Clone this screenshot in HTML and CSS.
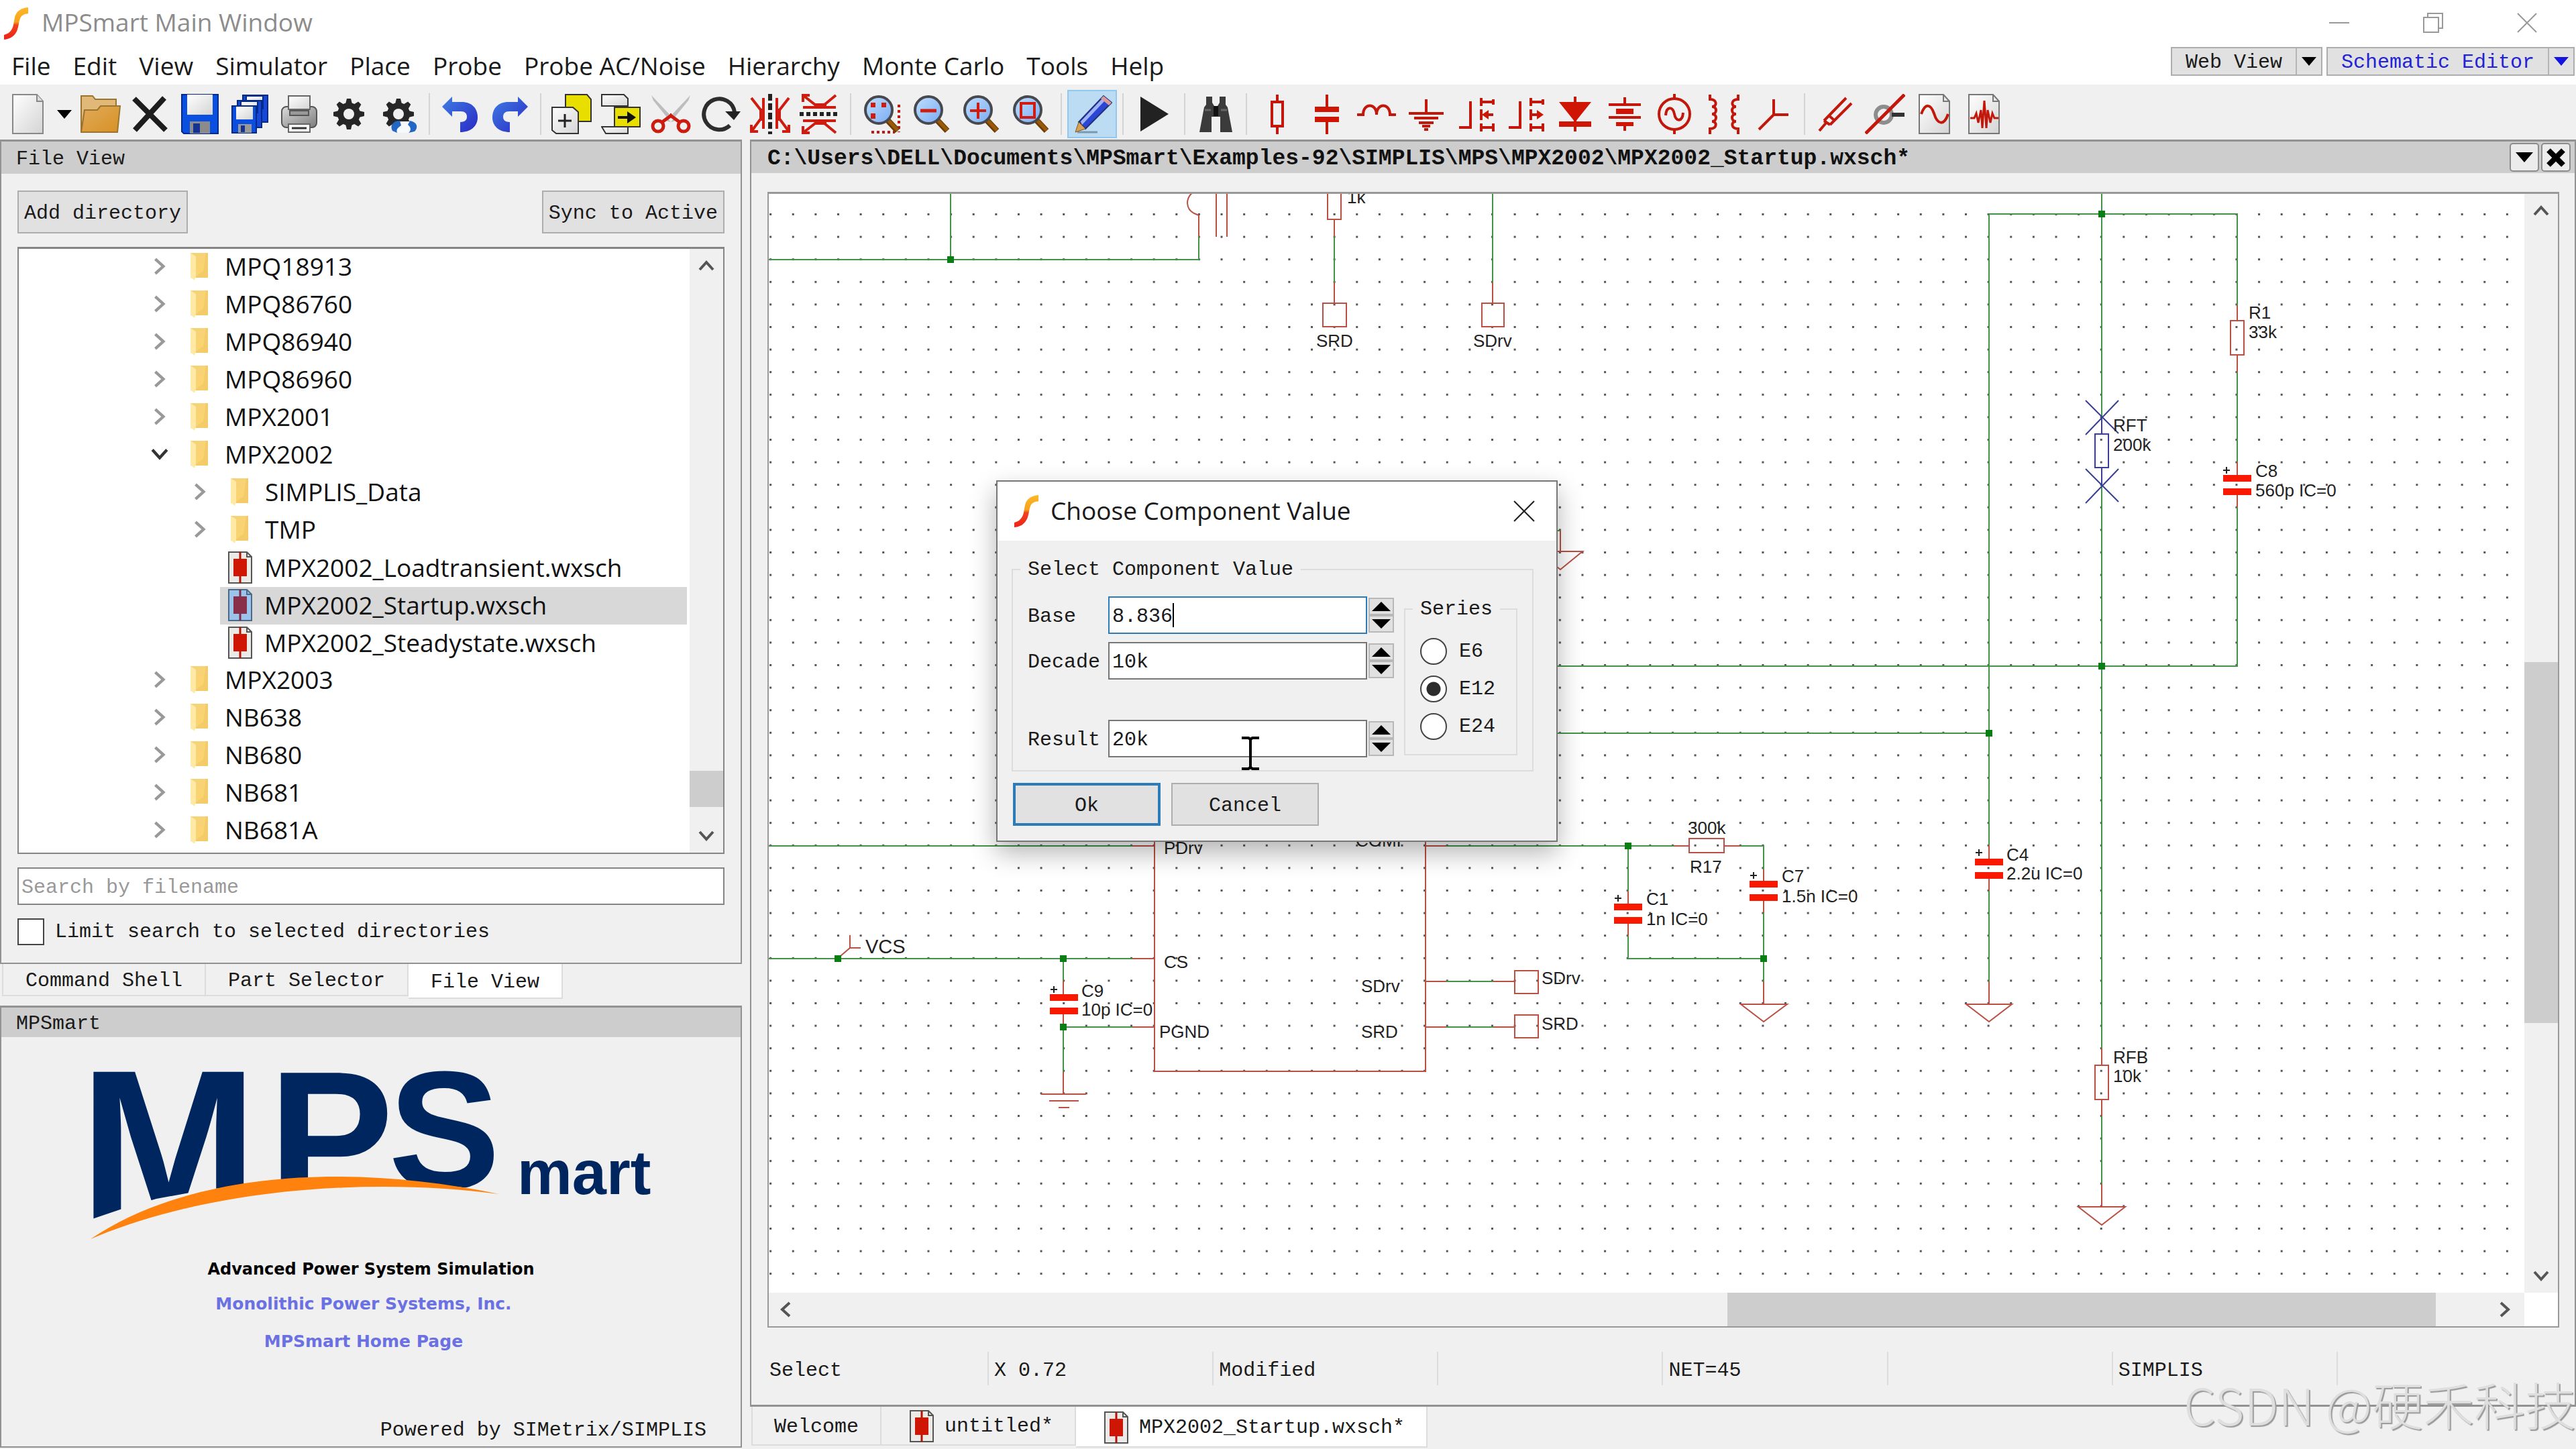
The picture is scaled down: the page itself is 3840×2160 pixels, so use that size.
FILE: index.html
```html
<!DOCTYPE html>
<html lang="en">
<head>
<meta charset="utf-8">
<title>MPSmart Main Window</title>
<link rel="stylesheet" href="styles.css">
</head>
<body>
<svg class="defs" width="0" height="0" aria-hidden="true">
  <defs>
    <linearGradient id="flame" x1="0" y1="0" x2="0" y2="1"><stop offset="0" stop-color="#fdb827"/><stop offset=".45" stop-color="#f9a21b"/><stop offset=".55" stop-color="#f0431d"/><stop offset="1" stop-color="#ee2218"/></linearGradient>
    <linearGradient id="paper" x1="0" y1="0" x2="1" y2="1"><stop offset="0" stop-color="#ffffff"/><stop offset="1" stop-color="#d4d4d4"/></linearGradient>
    <linearGradient id="wood" x1="0" y1="0" x2="1" y2="1"><stop offset="0" stop-color="#e0a95a"/><stop offset="1" stop-color="#d89224"/></linearGradient>
    <linearGradient id="blue" x1="0" y1="0" x2="1" y2="1"><stop offset="0" stop-color="#3f7fe4"/><stop offset="1" stop-color="#2a28c4"/></linearGradient>
    <linearGradient id="lens" x1="0" y1="0" x2="1" y2="1"><stop offset="0" stop-color="#bfe0ff"/><stop offset="1" stop-color="#7aaaf2"/></linearGradient>
    <linearGradient id="metal" x1="0" y1="0" x2="1" y2="1"><stop offset="0" stop-color="#dcdcdc"/><stop offset="1" stop-color="#7c7c7c"/></linearGradient>
    <linearGradient id="fold" x1="0" y1="0" x2="1" y2="1"><stop offset="0" stop-color="#f3d27c"/><stop offset="1" stop-color="#ffd56b"/></linearGradient>
    <symbol id="i-flame" viewBox="0 0 38 48"><path d="M37 0C26 1 19 6 17 15C15 25 15 32 9 37C6 40 3 40 1 41V48C11 47 18 42 21 33C24 24 23 14 30 11C33 9 36 10 37 9Z" fill="url(#flame)"/></symbol>
    <symbol id="i-folder" viewBox="0 0 28 42"><path d="M1 1H27V38H1Z" fill="url(#fold)"/><path d="M1 1L9 6V36L7 42L1 37Z" fill="#ffe9a4"/><path d="M9 36L20 28L24 1H27V38H9Z" fill="#eec565" opacity=".6"/></symbol>
    <symbol id="i-sch" viewBox="0 0 36 48"><path d="M1 1H28L35 8V47H1Z" fill="#eceae6" stroke="#555" stroke-width="2"/><path d="M28 1V8H35" fill="none" stroke="#555" stroke-width="2"/><path d="M18 1V47" stroke="#b41408" stroke-width="3"/><path d="M8 11H28V37H8Z" fill="#cf1503"/></symbol>
    <symbol id="i-sch-on" viewBox="0 0 36 48"><path d="M1 1H28L35 8V47H1Z" fill="#9cc4ea" stroke="#4b6a8a" stroke-width="2"/><path d="M28 1V8H35" fill="none" stroke="#4b6a8a" stroke-width="2"/><path d="M18 1V47" stroke="#7a2c4c" stroke-width="3"/><path d="M8 11H28V37H8Z" fill="#8a2f4a"/></symbol>
    <symbol id="i-gear" viewBox="0 0 60 60"><g transform="translate(30 30)" fill="#262626"><circle r="17"/><path id="tooth" d="M-5-15L-3-23H3L5-15V15L3 23H-3L-5 15Z"/><use href="#tooth" transform="rotate(45)"/><use href="#tooth" transform="rotate(90)"/><use href="#tooth" transform="rotate(135)"/><circle r="8" fill="#f0f0f0"/></g></symbol>
    <symbol id="i-lens" viewBox="0 0 60 60"><path d="M38 38L54 55" stroke="#6d3d05" stroke-width="9"/><path d="M38 37L54 54" stroke="#9a5a0c" stroke-width="5"/><circle cx="26" cy="24" r="20" fill="url(#lens)" stroke="#47494e" stroke-width="4"/></symbol>
    <symbol id="i-up" viewBox="0 0 24 20"><path d="M2 16L12 5L22 16" fill="none" stroke="currentColor" stroke-width="4"/></symbol>
    <symbol id="i-cap" viewBox="0 0 42 30"><path d="M0 0H42V10H0ZM0 20H42V30H0Z" fill="#f91800"/></symbol>
  </defs>
</svg>

<div class="app">
  <header class="titlebar">
    <svg class="flame"><use href="#i-flame"/></svg>
    <h1>MPSmart Main Window</h1>
    <div class="wincontrols">
      <button aria-label="Minimize"><svg viewBox="0 0 30 30"><path d="M0 15H30" class="thin"/></svg></button>
      <button aria-label="Restore"><svg viewBox="0 0 30 30"><path d="M1 7H23V29H1ZM7 7V1H29V23H23" class="thin"/></svg></button>
      <button aria-label="Close"><svg viewBox="0 0 30 30"><path d="M1 1L29 29M29 1L1 29" class="thin"/></svg></button>
    </div>
  </header>

  <nav class="menubar">
    <button>File</button><button>Edit</button><button>View</button><button>Simulator</button><button>Place</button><button>Probe</button><button>Probe AC/Noise</button><button>Hierarchy</button><button>Monte Carlo</button><button>Tools</button><button>Help</button>
    <div class="views">
      <button class="view"><span>Web View</span><i class="arrow"></i></button>
      <button class="view blue"><span>Schematic Editor</span><i class="arrow"></i></button>
    </div>
  </nav>

  <div class="toolbar">
    <button aria-label="New"><svg viewBox="0 0 60 60"><path d="M8 1H44L53 11V59H8Z" fill="url(#paper)" stroke="#888" stroke-width="2"/><path d="M44 1V11H53" fill="#ddd" stroke="#888" stroke-width="2"/></svg></button>
    <button class="drop" aria-label="New options"><i class="arrow"></i></button>
    <button aria-label="Open"><svg viewBox="0 0 60 60"><path d="M1 57V3H18L22 8H53V20" fill="#e2b878" stroke="#9b7430" stroke-width="2"/><path d="M1 57L6 24H25L30 18H59L55 57Z" fill="url(#wood)" stroke="#9b7430" stroke-width="2"/></svg></button>
    <button aria-label="Close file"><svg viewBox="0 0 60 60"><path d="M6 7L53 54M51 6L7 54" stroke="#1d1d1d" stroke-width="8"/></svg></button>
    <button aria-label="Save"><svg viewBox="0 0 60 60"><path d="M3 1H57V59H6L3 56Z" fill="#0a4fe0" stroke="#032a86" stroke-width="2"/><path d="M11 1H49V31H11Z" fill="url(#paper)"/><path d="M15 41H45V59H15Z" fill="#8b8b8b"/><path d="M20 44H30V58H20Z" fill="#14328f"/></svg></button>
    <button aria-label="Save all"><svg viewBox="0 0 60 60"><g stroke="#032a86" stroke-width="2"><path d="M20 2H57V42H20Z" fill="#1648d8"/><path d="M25 3H50V22H25Z" fill="url(#paper)"/><path d="M12 10H48V50H12Z" fill="#1648d8"/><path d="M17 11H42V28H17Z" fill="url(#paper)"/><path d="M4 18H40V58H4Z" fill="#0a4fe0"/></g><path d="M10 19H35V38H10Z" fill="url(#paper)"/><path d="M13 45H33V58H13Z" fill="#999"/><path d="M17 47H23V57H17Z" fill="#14328f"/></svg></button>
    <button aria-label="Print"><svg viewBox="0 0 60 60"><rect x="4" y="19" width="52" height="31" rx="7" fill="url(#metal)" stroke="#555" stroke-width="2"/><path d="M14 3H46V23H14Z" fill="url(#paper)" stroke="#666" stroke-width="2"/><path d="M16 25H44V32H16Z" fill="#999" stroke="#555" stroke-width="2"/><path d="M14 45H46V57H14Z" fill="#fff" stroke="#666" stroke-width="2"/><path d="M19 51H41" stroke="#333" stroke-width="3"/></svg></button>
    <button aria-label="Options"><svg><use href="#i-gear"/></svg></button>
    <button aria-label="Configure"><svg viewBox="0 0 60 60"><use href="#i-gear" width="60" height="60"/><path d="M27 41H48L54 58H30L22 48Z" fill="#f6f8fc"/><path d="M32 40C21 40 17 48 21 55L28 58C26 52 30 50 34 47ZM47 40C58 42 60 50 54 56L45 58C50 54 48 49 44 46Z" fill="#2466c4"/></svg></button>
    <span class="sep"></span>
    <button aria-label="Undo"><svg viewBox="0 0 60 60"><path d="M3 19L18 4V12H32C48 12 56 22 56 35C56 48 46 57 30 57V42C38 42 40 38 40 34C40 29 37 26 31 26H18V34Z" fill="url(#blue)"/></svg></button>
    <button aria-label="Redo"><svg viewBox="0 0 60 60"><path d="M57 19L42 4V12H28C12 12 4 22 4 35C4 48 14 57 30 57V42C22 42 20 38 20 34C20 29 23 26 29 26H42V34Z" fill="url(#blue)"/></svg></button>
    <span class="sep"></span>
    <button aria-label="Duplicate"><svg viewBox="0 0 60 60"><path d="M21 1H53L59 8V41H21Z" fill="#e8de00" stroke="#333" stroke-width="2"/><path d="M1 20H32L40 27V59H7L1 54Z" fill="url(#paper)" stroke="#333" stroke-width="2"/><path d="M20 30V50M10 40H30" stroke="#222" stroke-width="3"/></svg></button>
    <button aria-label="Paste"><svg viewBox="0 0 60 60"><path d="M1 1H34L40 7V18H1Z" fill="url(#paper)" stroke="#333" stroke-width="2"/><path d="M1 49H40V59H7Z" fill="url(#paper)" stroke="#333" stroke-width="2"/><path d="M20 20H58V49H20Z" fill="#e8de00" stroke="#333" stroke-width="2"/><path d="M25 35H42" stroke="#111" stroke-width="4"/><path d="M39 26L52 35L39 44Z" fill="#111"/></svg></button>
    <button aria-label="Cut"><svg viewBox="0 0 60 60"><path d="M1 2L37 40L30 42L4 10ZM59 2L23 40L30 42L56 10Z" fill="#bdbdbd"/><g fill="none" stroke="#cc1c10" stroke-width="5"><circle cx="11" cy="48" r="8"/><circle cx="49" cy="48" r="8"/><path d="M17 42L32 31M43 42L28 31"/></g></svg></button>
    <button aria-label="Rotate"><svg viewBox="0 0 60 60"><path d="M44 47A23 23 0 1 1 51 27" fill="none" stroke="#2d2d2d" stroke-width="6"/><path d="M37 26H60L50 39Z" fill="#222"/></svg></button>
    <button aria-label="Mirror"><svg viewBox="0 0 60 60"><g stroke="#cf1c10" stroke-width="4" fill="none"><path d="M2 6L16 24V37L2 56M20 6V52M58 6L44 24V37L58 56M40 6V52"/><path d="M2 46V56H12M58 46V56H48"/></g><path d="M14 22H22V40H14ZM38 22H46V40H38Z" fill="#cf1c10"/><path d="M30 0V60" stroke="#222" stroke-width="6" stroke-dasharray="10 4"/></svg></button>
    <button aria-label="Flip"><svg viewBox="0 0 60 60"><g stroke="#cf1c10" stroke-width="4" fill="none"><path d="M5 2L23 16H37L54 2M5 20H54M5 58L23 44H37L54 58M5 40H54"/><path d="M5 12V2H15M5 48V58H15"/></g><path d="M22 14H40V22H22ZM22 38H40V46H22Z" fill="#cf1c10"/><path d="M0 30H60" stroke="#222" stroke-width="6" stroke-dasharray="6 4"/></svg></button>
    <span class="sep"></span>
    <button aria-label="Zoom box"><svg viewBox="0 0 60 60"><path d="M15 57H50M56 16V57" stroke="#c01810" stroke-width="4" stroke-dasharray="4 4"/><use href="#i-lens" width="60" height="60"/><path d="M14 13H21V20H14ZM30 13H37V20H30ZM14 29H21V37H14Z" fill="#cf1c10"/></svg></button>
    <button aria-label="Zoom out"><svg viewBox="0 0 60 60"><use href="#i-lens" width="60" height="60"/><path d="M14 25H38" stroke="#cf1c10" stroke-width="5"/></svg></button>
    <button aria-label="Zoom in"><svg viewBox="0 0 60 60"><use href="#i-lens" width="60" height="60"/><path d="M14 25H38M26 13V37" stroke="#cf1c10" stroke-width="4"/></svg></button>
    <button aria-label="Zoom fit"><svg viewBox="0 0 60 60"><use href="#i-lens" width="60" height="60"/><path d="M16 14H36V35H16Z" fill="none" stroke="#cf1c10" stroke-width="4"/></svg></button>
    <span class="sep"></span>
    <button class="on" aria-label="Wire pencil"><svg viewBox="0 0 60 60"><path d="M8 57H38" stroke="#7b98ad" stroke-width="3"/><path d="M10 42L47 3L59 13L20 52Z" fill="#2a46d4" stroke="#23307a" stroke-width="2"/><path d="M13 41L47 5L51 8L15 46Z" fill="#9fb2f4"/><path d="M43 7L47 3L59 13L55 17Z" fill="#d99a9a"/><path d="M10 42L20 52L5 57Z" fill="#d9a154" stroke="#7d5a22"/></svg></button>
    <span class="sep"></span>
    <button aria-label="Run"><svg viewBox="0 0 60 60"><path d="M10 4L52 30L10 56Z" fill="#222"/></svg></button>
    <span class="sep"></span>
    <button aria-label="Find"><svg viewBox="0 0 60 60"><path d="M16 4H25V13L28 18H33L36 13V4H45V16L48 20L55 57H37V34H24V57H6L13 20L16 16Z" fill="#3b3b3b"/><path d="M27 18H34V33H27Z" fill="#111"/><path d="M14 24H23M38 24H47" stroke="#666" stroke-width="3"/></svg></button>
    <span class="sep"></span>
    <button class="red" aria-label="Resistor"><svg viewBox="0 0 60 60"><path d="M30 1V12M30 48V60M22 12H38V48H22Z"/></svg></button>
    <button class="red" aria-label="Capacitor"><svg viewBox="0 0 60 60"><path d="M30 1V20M30 40V60"/><path d="M12 19H48V27H12ZM12 34H48V42H12Z" class="fill"/></svg></button>
    <button class="red" aria-label="Inductor"><svg viewBox="0 0 60 60"><path d="M1 31H10C10 13 30 13 30 31C30 13 50 13 50 31H59"/></svg></button>
    <button class="red" aria-label="Ground"><svg viewBox="0 0 60 60"><path d="M30 8V29M4 29H56M12 36H48M19 43H41M24 48H36M27 53H33"/></svg></button>
    <button class="red" aria-label="NMOS"><svg viewBox="0 0 60 60"><path d="M5 50H22V11M38 6V18M38 23V39M38 44V56M38 12H56M38 50H56M56 8V16M56 44V56M42 31H56"/><path d="M39 31L49 24V38Z" class="fill"/></svg></button>
    <button class="red" aria-label="PMOS"><svg viewBox="0 0 60 60"><path d="M5 50H22V11M38 6V18M38 23V39M38 44V56M38 12H56M38 50H56M56 8V16M56 44V56M38 31H48"/><path d="M57 31L47 24V38Z" class="fill"/></svg></button>
    <button class="red" aria-label="Diode"><svg viewBox="0 0 60 60"><path d="M30 4V56"/><path d="M6 12H54L30 42ZM6 41H54V49H6Z" class="fill"/></svg></button>
    <button class="red" aria-label="Battery"><svg viewBox="0 0 60 60"><path d="M30 5V16M30 46V55M6 16H54M6 35H54"/><path d="M17 22H43V30H17ZM17 42H43V48H17Z" class="fill"/></svg></button>
    <button class="red" aria-label="AC source"><svg viewBox="0 0 60 60"><circle cx="30" cy="30" r="23"/><path d="M30 0V7M30 53V60M17 32C18 18 28 18 30 30C32 42 42 42 43 28"/></svg></button>
    <button class="red" aria-label="Transformer"><svg viewBox="0 0 60 60"><path d="M9 1V8C20 8 20 19 12 19C20 19 20 30 12 30C20 30 20 41 12 41C20 41 20 52 9 52V60M51 1V8C40 8 40 19 48 19C40 19 40 30 48 30C40 30 40 41 48 41C40 41 40 52 51 52V60"/></svg></button>
    <button class="red" aria-label="Probe"><svg viewBox="0 0 60 60"><path d="M30 8V31H52M30 31L8 53"/></svg></button>
    <span class="sep"></span>
    <button class="red" aria-label="Voltage probe"><svg viewBox="0 0 60 60"><path d="M6 55L18 41M13 40L46 6M22 46L54 14M13 40L22 46M20 32L28 39"/></svg></button>
    <button aria-label="Current probe"><svg viewBox="0 0 60 60"><circle cx="28" cy="31" r="12" fill="none" stroke="#8d8d8d" stroke-width="6"/><path d="M40 31H59" stroke="#333" stroke-width="6"/><path d="M1 59L59 1" stroke="#c2180c" stroke-width="5"/></svg></button>
    <button aria-label="Waveform"><svg viewBox="0 0 60 60"><path d="M7 1H43L52 11V59H7Z" fill="url(#paper)" stroke="#777" stroke-width="2"/><path d="M43 1V11H52" fill="none" stroke="#777" stroke-width="2"/><path d="M10 30C16 13 24 15 29 29C34 46 44 48 50 30" fill="none" stroke="#c2180c" stroke-width="4"/></svg></button>
    <button aria-label="Fourier"><svg viewBox="0 0 60 60"><path d="M7 1H43L52 11V59H7Z" fill="url(#paper)" stroke="#777" stroke-width="2"/><path d="M43 1V11H52" fill="none" stroke="#777" stroke-width="2"/><path d="M9 36H15L18 29L21 43L25 24L27 51L30 10L33 51L35 24L39 43L42 29L45 36H51" fill="none" stroke="#c2180c" stroke-width="3"/></svg></button>
  </div>

  <main class="workspace">
    <aside class="sidebar">
      <section class="dock files">
        <h2>File View</h2>
        <div class="dockbody">
          <div class="actions"><button class="btn">Add directory</button><button class="btn">Sync to Active</button></div>
          <div class="treebox">
            <ul class="tree">
              <li><svg class="chev"><use href="#i-up"/></svg><svg class="folder"><use href="#i-folder"/></svg>MPQ18913</li>
              <li><svg class="chev"><use href="#i-up"/></svg><svg class="folder"><use href="#i-folder"/></svg>MPQ86760</li>
              <li><svg class="chev"><use href="#i-up"/></svg><svg class="folder"><use href="#i-folder"/></svg>MPQ86940</li>
              <li><svg class="chev"><use href="#i-up"/></svg><svg class="folder"><use href="#i-folder"/></svg>MPQ86960</li>
              <li><svg class="chev"><use href="#i-up"/></svg><svg class="folder"><use href="#i-folder"/></svg>MPX2001</li>
              <li><svg class="chev open"><use href="#i-up"/></svg><svg class="folder"><use href="#i-folder"/></svg>MPX2002</li>
              <li class="child"><svg class="chev"><use href="#i-up"/></svg><svg class="folder"><use href="#i-folder"/></svg>SIMPLIS_Data</li>
              <li class="child"><svg class="chev"><use href="#i-up"/></svg><svg class="folder"><use href="#i-folder"/></svg>TMP</li>
              <li class="leaf"><span><svg class="sch"><use href="#i-sch"/></svg>MPX2002_Loadtransient.wxsch</span></li>
              <li class="leaf selected"><span><svg class="sch"><use href="#i-sch-on"/></svg>MPX2002_Startup.wxsch</span></li>
              <li class="leaf"><span><svg class="sch"><use href="#i-sch"/></svg>MPX2002_Steadystate.wxsch</span></li>
              <li><svg class="chev"><use href="#i-up"/></svg><svg class="folder"><use href="#i-folder"/></svg>MPX2003</li>
              <li><svg class="chev"><use href="#i-up"/></svg><svg class="folder"><use href="#i-folder"/></svg>NB638</li>
              <li><svg class="chev"><use href="#i-up"/></svg><svg class="folder"><use href="#i-folder"/></svg>NB680</li>
              <li><svg class="chev"><use href="#i-up"/></svg><svg class="folder"><use href="#i-folder"/></svg>NB681</li>
              <li><svg class="chev"><use href="#i-up"/></svg><svg class="folder"><use href="#i-folder"/></svg>NB681A</li>
            </ul>
            <div class="scroll vert tree-scroll"><svg class="tip"><use href="#i-up"/></svg><i class="before"></i><i class="thumb"></i><i class="after"></i><svg class="tip down"><use href="#i-up"/></svg></div>
          </div>
          <input class="search" type="text" placeholder="Search by filename" aria-label="Search by filename">
          <label class="limit"><input type="checkbox">Limit search to selected directories</label>
        </div>
      </section>
      <div class="tabs side-tabs"><button>Command Shell</button><button>Part Selector</button><button class="active">File View</button></div>
      <section class="dock about">
        <h2>MPSmart</h2>
        <svg class="logo" viewBox="104 1560 900 300" role="img" aria-label="MPS mart">
          <g class="mps"><text class="big" x="119" y="1820">M</text><text class="mid" x="401" y="1794">P</text><text class="low" x="580" y="1774">S</text></g>
          <path d="M130 1822L183 1804L234 1789L300 1777L410 1762H600L745 1778V1845H130Z" fill="#f0f0f0"/>
          <path d="M136 1849C280 1752 510 1733 745 1782C540 1755 300 1778 136 1849Z" fill="#fe820d"/>
          <text class="mart" x="772" y="1782">mart</text>
        </svg>
        <p class="tagline">Advanced Power System Simulation</p>
        <a href="#mps">Monolithic Power Systems, Inc.</a>
        <a href="#home">MPSmart Home Page</a>
        <p class="powered">Powered by SIMetrix/SIMPLIS</p>
      </section>
    </aside>

    <section class="editor">
      <div class="sheet">
        <header class="path"><h2>C:\Users\DELL\Documents\MPSmart\Examples-92\SIMPLIS\MPS\MPX2002\MPX2002_Startup.wxsch*</h2>
          <button aria-label="List"><i class="arrow"></i></button><button aria-label="Close sheet"><svg viewBox="0 0 28 28"><path d="M3 3L25 25M25 3L3 25" stroke="#000" stroke-width="8"/></svg></button>
        </header>
        <div class="canvas">
          <div class="view-area">
          <svg class="schematic">
            <defs><pattern id="grid" x="1249" y="319" width="33.62" height="33.6" patternUnits="userSpaceOnUse"><rect width="3" height="3" fill="#555"/></pattern></defs>
            <g transform="translate(-1146 -289)">
              <rect x="1146" y="280" width="2700" height="1640" fill="url(#grid)" transform="translate(-1 -1)"/>
              <g class="wire">
                <path d="M1417 280V387M1146 387H1787V353M1989 353V421M2225 280V421"/>
                <path d="M3133 280V622M2965 1260V319H3335V455M3335 555V689M3335 756V993H2300M2300 1093H2965M3133 724V1563M3133 1664V1765"/>
                <path d="M1146 1261H1688M1146 1429H1688M1585 1429V1462M1585 1531V1598M1585 1531H1688"/>
                <path d="M2156 1463H2226M2156 1531H2226M2156 1261H2495M2427 1261V1329M2427 1395V1429H2629M2594 1261H2629V1296M2629 1361V1463M2965 1328V1463"/>
                <path d="M2300 791H2326"/>
              </g>
              <g class="part">
                <path d="M1779 286C1766 296 1768 312 1780 318L1787 321V353M1813 286V353M1829 286V353"/>
                <path d="M1979 280V327H1999V280M1989 327V353M1989 421V452M1972 452H2007V487H1972ZM2225 421V452M2209 452H2242V487H2209Z"/>
                <path d="M3335 455V478M3325 478H3345V529H3325ZM3335 529V555M3335 689V708M3335 738V756"/>
                <path d="M2326 791V822M2292 822H2359L2326 849Z"/>
                <path d="M1688 1261H1721M1688 1429H1721M1688 1531H1721M1721 1200V1597H2125V1200M2125 1261H2156M2125 1463H2156M2125 1531H2156"/>
                <path d="M2226 1463H2258V1447H2293V1481H2258V1463M2226 1531H2258V1513H2293V1547H2258V1531"/>
                <path d="M1253 1425L1267 1413V1394M1267 1413H1283"/>
                <path d="M1585 1462V1482M1585 1512V1531M1585 1598V1631M1552 1631H1619M1564 1641H1608M1578 1651H1594"/>
                <path d="M2495 1261H2518M2518 1250H2570V1271H2518ZM2570 1261H2594"/>
                <path d="M2427 1329V1348M2427 1376V1395M2629 1296V1313M2629 1343V1361M2629 1463V1497M2595 1497H2664L2629 1523Z"/>
                <path d="M2965 1260V1280M2965 1310V1328M2965 1463V1497M2931 1497H2999L2965 1523Z"/>
                <path d="M3133 1563V1588M3123 1588H3143V1639H3123ZM3133 1639V1664M3133 1765V1799M3098 1799H3168L3133 1826Z"/>
              </g>
              <g class="picked"><path d="M3109 597L3158 646M3158 597L3109 648M3109 699L3158 748M3158 699L3109 750M3133 622V647M3123 647H3143V697H3123ZM3133 697V724"/></g>
              <use href="#i-cap" x="3314" y="708" width="42" height="30"/>
              <use href="#i-cap" x="1565" y="1482" width="42" height="30"/>
              <use href="#i-cap" x="2406" y="1347" width="42" height="30"/>
              <use href="#i-cap" x="2608" y="1313" width="42" height="30"/>
              <use href="#i-cap" x="2944" y="1280" width="42" height="30"/>
              <path class="plus" d="M3314 701H3324M3319 696V706M1566 1475H1576M1571 1470V1480M2407 1339H2417M2412 1334V1344M2609 1305H2619M2614 1300V1310M2945 1271H2955M2950 1266V1276"/>
              <path class="node" d="M1412 382h10v10h-10zM3128 314h10v10h-10zM3128 988h10v10h-10zM2960 1088h10v10h-10zM1244 1424h10v10h-10zM1580 1424h10v10h-10zM1580 1526h10v10h-10zM2422 1256h10v10h-10zM2624 1424h10v10h-10z"/>
              <g class="names">
                <text x="2008" y="303">1k</text><text x="1962" y="517">SRD</text><text x="2196" y="517">SDrv</text>
                <text x="3352" y="475">R1</text><text x="3352" y="504">33k</text>
                <text x="3150" y="643">RFT</text><text x="3150" y="672">200k</text>
                <text x="3362" y="711">C8</text><text x="3362" y="740">560p IC=0</text>
                <text x="1735" y="1273">PDrv</text><text x="2021" y="1262">COMP</text><text x="1735" y="1443">CS</text><text x="1728" y="1547">PGND</text>
                <text x="2029" y="1479">SDrv</text><text x="2029" y="1547">SRD</text><text x="2298" y="1467">SDrv</text><text x="2298" y="1535">SRD</text>
                <text x="1290" y="1421" class="wide">VCS</text><text x="1612" y="1486">C9</text><text x="1612" y="1514">10p IC=0</text>
                <text x="2516" y="1243">300k</text><text x="2519" y="1301">R17</text>
                <text x="2454" y="1349">C1</text><text x="2454" y="1379">1n IC=0</text>
                <text x="2656" y="1315">C7</text><text x="2656" y="1345">1.5n IC=0</text>
                <text x="2991" y="1283">C4</text><text x="2991" y="1311">2.2u IC=0</text>
                <text x="3150" y="1585">RFB</text><text x="3150" y="1613">10k</text>
              </g>
            </g>
          </svg>
          </div>
          <div class="scroll vert sheet-v"><svg class="tip"><use href="#i-up"/></svg><i class="before"></i><i class="thumb"></i><i class="after"></i><svg class="tip down"><use href="#i-up"/></svg></div>
          <div class="scroll horiz sheet-h"><svg class="tip left"><use href="#i-up"/></svg><i class="before"></i><i class="thumb"></i><i class="after"></i><svg class="tip right"><use href="#i-up"/></svg></div>
        </div>
        <footer class="status"><span>Select</span><span>X 0.72</span><span>Modified</span><span></span><span>NET=45</span><span></span><span>SIMPLIS</span><span></span></footer>
      </div>
      <div class="tabs sheet-tabs"><button>Welcome</button><button><svg class="sch"><use href="#i-sch"/></svg>untitled*</button><button class="active"><svg class="sch"><use href="#i-sch"/></svg>MPX2002_Startup.wxsch*</button></div>
    </section>
  </main>

  <div class="dialog" role="dialog" aria-labelledby="dlg">
    <header><svg class="flame"><use href="#i-flame"/></svg><h2 id="dlg">Choose Component Value</h2><button aria-label="Close dialog"><svg viewBox="0 0 30 30"><path d="M1 1L29 29M29 1L1 29" stroke="#222" stroke-width="2"/></svg></button></header>
    <form>
      <fieldset class="group">
        <legend>Select Component Value</legend>
        <div class="fields">
          <label for="base">Base</label><div class="field"><input id="base" class="focus" value="8.836"><i class="caret"></i></div><div class="spin"><button type="button" aria-label="Base up"><i class="tri up"></i></button><button type="button" aria-label="Base down"><i class="tri"></i></button></div>
          <label for="decade">Decade</label><div class="field"><input id="decade" value="10k"></div><div class="spin"><button type="button" aria-label="Decade up"><i class="tri up"></i></button><button type="button" aria-label="Decade down"><i class="tri"></i></button></div>
          <label for="result" class="last">Result</label><div class="field last"><input id="result" value="20k"></div><div class="spin last"><button type="button" aria-label="Result up"><i class="tri up"></i></button><button type="button" aria-label="Result down"><i class="tri"></i></button></div>
        </div>
        <fieldset class="series">
          <legend>Series</legend>
          <label><input type="radio" name="series">E6</label>
          <label><input type="radio" name="series" checked>E12</label>
          <label><input type="radio" name="series">E24</label>
        </fieldset>
      </fieldset>
      <div class="buttons"><button type="button" class="btn default">Ok</button><button type="button" class="btn">Cancel</button></div>
    </form>
    <svg class="ibeam" viewBox="0 0 28 50"><path d="M1 2H11L14 4L17 2H27M1 48H11L14 46L17 48H27M14 4V46" fill="none" stroke="#000" stroke-width="4"/></svg>
  </div>

  <div class="watermark">CSDN @硬禾科技</div>
</div>
</body>
</html>
```
FILE: styles.css
```css
* { box-sizing: border-box; }
body { margin: 0; background: #f0f0f0; color: #1a1a1a; font: 30px/36px "Liberation Mono", "Noto Sans CJK SC", monospace; }
button, input { font: inherit; color: inherit; }
button { border: 0; background: none; padding: 0; margin: 0; }
h1, h2, p, ul { margin: 0; padding: 0; font-weight: normal; font-size: inherit; }
.defs { position: absolute; }
.app { position: relative; display: flex; flex-direction: column; min-height: 100vh; overflow: hidden; }

.titlebar, .menubar, .tree, .dialog header { font-family: "Open Sans", "Noto Sans", sans-serif; font-size: 37px; line-height: 56px; }
.titlebar { display: flex; align-items: center; height: 70px; background: #fff; padding-left: 5px; }
.titlebar h1 { color: #8c8c8c; flex: 1; margin-left: 19px; padding-bottom: 4px; }
.flame { width: 38px; height: 48px; }
.wincontrols { display: flex; gap: 110px; padding: 0 58px 2px 0; }
.wincontrols svg { display: block; width: 30px; height: 30px; }
.thin { fill: none; stroke: #999; stroke-width: 2; }

.menubar { display: flex; align-items: flex-start; gap: 33px; height: 56px; background: #fff; padding: 0 2px 0 17px; }
.views { display: flex; gap: 6px; margin-left: auto; font: 30px/43px "Liberation Mono", monospace; }
.view { display: flex; height: 43px; border: 2px solid #adadad; background: #e1e1e1; }
.view span { height: 39px; padding: 0 20px; border-right: 2px solid #b5b5b5; }
.view .arrow { align-self: center; margin: 0 7px; }
.blue { color: #2222d8; }
.arrow { display: block; width: 0; height: 0; border: 11px solid transparent; border-top: 13px solid #000; border-bottom: 0; }
.blue .arrow { border-top-color: #1414e0; }

.toolbar { display: flex; align-items: center; height: 82px; padding: 6px 0 0 4px; background: #f0f0f0; }
.toolbar button { width: 74px; height: 72px; display: grid; place-items: center; }
.toolbar svg { width: 60px; height: 60px; }
.toolbar .drop { width: 35px; }
.toolbar .on { background: #bcdcf4; border: 2px solid #90c8f0; }
.sep { width: 2px; height: 62px; margin: 0 8px; background: #d4d4d4; }
.red svg { fill: none; stroke: #c2180c; stroke-width: 4; }
.red .fill { fill: #cf1503; stroke: none; }

.workspace { flex: 1; display: flex; gap: 12px; }
.sidebar { flex: 0 0 28.8%; display: flex; flex-direction: column; }
.dock { border: 2px solid #929292; border-top-width: 3px; }
.dock h2 { background: #cdcdcd; padding: 8px 22px 4px; }
.dockbody { padding: 25px 24px 26px; }
.actions { display: flex; justify-content: space-between; margin-bottom: 20px; }
.btn { height: 64px; border: 2px solid #adadad; background: #e1e1e1; padding-top: 4px; }
.actions .btn { padding: 4px 8px 0; }
.treebox { display: flex; border: 2px solid #858585; border-top-width: 3px; background: #fff; height: 905px; }
.tree { flex: 1; list-style: none; line-height: 52px; }
.tree li { display: flex; align-items: center; height: 56px; padding: 0 0 4px 197px; color: #111; }
.tree .child { padding-left: 257px; }
.tree .leaf { padding: 0 0 0 300px; }
.leaf span { display: flex; align-items: center; flex: 1; height: 56px; padding: 0 0 3px 12px; margin-right: 4px; }
.selected span { background: #d8d8d8; }
.chev { width: 26px; height: 26px; margin-right: 32px; color: #999; transform: rotate(90deg); }
.chev.open { color: #333; transform: rotate(180deg); }
.folder { width: 28px; height: 42px; margin-right: 24px; }
.sch { width: 36px; height: 48px; margin-right: 18px; }
.scroll { display: flex; background: #f0f0f0; color: #555; align-items: center; }
.vert { flex-direction: column; width: 50px; }
.horiz { height: 50px; }
.tip { flex: 0 0 24px; width: 24px; height: 24px; margin: 13px; }
.down { transform: rotate(180deg); }
.left { transform: rotate(-90deg); }
.right { transform: rotate(90deg); margin: 13px 17px 13px 9px; }
.thumb { background: #cdcdcd; align-self: stretch; }
.tree-scroll .before { flex: 727; } .tree-scroll .thumb { flex: 54; } .tree-scroll .after { flex: 18; }
.sheet-v .before { flex: 648; } .sheet-v .thumb { flex: 537; } .sheet-v .after { flex: 352; }
.sheet-h .before { flex: 1378; } .sheet-h .thumb { flex: 1055; } .sheet-h .after { flex: 82; }
.search { display: block; width: 100%; height: 56px; margin: 20px 0; border: 2px solid #858585; padding: 3px 4px 0; background: #fff; }
.search::placeholder { color: #999; opacity: 1; }
.limit { display: flex; align-items: center; height: 40px; gap: 16px; }
.limit input { appearance: none; width: 40px; height: 40px; margin: 0; border: 2px solid #444; background: #fff; }

.tabs { display: flex; align-items: flex-start; }
.tabs button { display: flex; align-items: center; justify-content: center; border: 2px solid #dcdcdc; border-top: 0; }
.tabs .active { background: #fff; }
.side-tabs { height: 62px; padding-left: 3px; }
.side-tabs button { height: 48px; padding: 4px 33px 0; }
.side-tabs button + button { border-left: 0; }
.side-tabs .active { height: 52px; }
.about { flex: 1; display: flex; flex-direction: column; align-items: center; margin-bottom: 2px; font-family: "DejaVu Sans", sans-serif; }
.about h2, .powered { font-family: "Liberation Mono", monospace; }
.about h2 { align-self: stretch; padding: 6px 22px 2px; }
.logo { width: 900px; height: 300px; margin-top: 12px; }
.mps, .mart { font: bold 92px "Liberation Sans", sans-serif; fill: #00265f; }
.big { font-size: 320px; }
.mid { font-size: 280px; }
.low { font-size: 250px; }
.tagline, .about a { font-size: 25px; font-weight: bold; line-height: 36px; }
.tagline { font-size: 24px; color: #000; margin: 16px 0; }
.about a { color: #6b70e2; text-decoration: none; margin: 0 22px 20px 0; }
.powered { margin-top: auto; align-self: flex-end; padding: 0 51px 6px; }

.editor { flex: 1; display: flex; flex-direction: column; min-width: 0; }
.sheet { flex: 1; display: flex; flex-direction: column; border: 2px solid #929292; border-top-width: 3px; border-bottom-width: 3px; }
.path { display: flex; align-items: center; height: 47px; background: #cdcdcd; gap: 3px; padding-right: 6px; }
.path h2 { flex: 1; padding: 4px 0 0 24px; font-weight: bold; font-size: 33px; color: #111; }
.path button { display: grid; place-items: center; width: 44px; height: 43px; border: 2px solid #8c8c8c; border-radius: 5px; background: #ececec; }
.path .arrow { border-width: 15px 13px 0; }
.path svg { width: 30px; height: 28px; }
.canvas { flex: 1; display: grid; grid-template: 1fr 50px / 1fr 50px; margin: 28px 23px 0 24px; border: 2px solid #999; border-top-width: 3px; background: #fff; }
.view-area { position: relative; overflow: hidden; }
.schematic { position: absolute; width: 100%; height: 100%; }
.wire { fill: none; stroke: #43934a; stroke-width: 2; }
.part { fill: none; stroke: #bb4f43; stroke-width: 2; }
.picked { fill: none; stroke: #3b3f94; stroke-width: 2; }
.plus { stroke: #222; stroke-width: 2; }
.node { fill: #0a7d14; }
.names { font: 26px "Liberation Sans", sans-serif; fill: #222; }
.names .wide { font-size: 29px; }
.status { display: grid; grid-template-columns: repeat(8, 1fr); margin: 36px 20px 29px 17px; }
.status span { height: 50px; line-height: 56px; padding-left: 8px; border-left: 2px solid #dcdcdc; }
.status span:first-child { border-color: transparent; }
.sheet-tabs { height: 63px; padding-left: 2px; }
.sheet-tabs button { height: 58px; padding: 4px 32px 0; }
.sheet-tabs button + button { border-left: 0; padding: 2px 32px 0 42px; }
.sheet-tabs .sch { margin-right: 16px; }
.sheet-tabs .active { height: 61px; }

.dialog { position: absolute; left: 1485px; top: 716px; width: 837px; border: 2px solid #777; background: #f0f0f0; box-shadow: 0 16px 36px rgba(0,0,0,.3); }
.dialog header { display: flex; align-items: center; height: 88px; background: #fff; padding: 0 32px 0 24px; }
.dialog h2 { flex: 1; margin-left: 17px; padding-bottom: 3px; }
.dialog header button svg { display: block; width: 32px; height: 32px; }
form { padding: 24px 34px 22px 21px; }
fieldset { border: 2px solid #dcdcdc; margin: 0; min-width: 0; }
legend { padding: 1px 11px 0; }
.group { display: flex; gap: 15px; padding: 22px 22px 19px; }
.group > legend { margin-left: -11px; }
.fields { display: grid; grid-template: 56px 56px 36px 56px / 120px 386px 40px; row-gap: 12px; align-items: center; }
.fields label { padding-top: 3px; }
.last { grid-row: 4; }
.field { position: relative; }
.field input { display: block; width: 100%; height: 56px; border: 2px solid #777; background: #fff; padding: 3px 4px 0; }
.field .focus { border-color: #2b7cb8; }
.caret { position: absolute; left: 96px; top: 10px; width: 2px; height: 36px; background: #000; }
.spin { display: grid; margin-left: 2px; }
.spin button { display: grid; place-items: center; height: 26px; border: 2px solid #b8b8b8; background: #e1e1e1; }
.tri { border: 14px solid transparent; border-top: 14px solid #000; border-bottom: 0; }
.tri.up { transform: rotate(180deg); }
.series { flex: 1; padding: 17px 20px 13px 22px; align-self: start; }
.series legend { margin-left: -11px; }
.series label { display: flex; align-items: center; gap: 18px; height: 56px; }
.series input { appearance: none; width: 40px; height: 40px; margin: 0; border: 2px solid #444; border-radius: 50%; background: #fff; }
.series input:checked { background: radial-gradient(circle, #2c2c2c 10px, #fff 11px); }
.buttons { display: flex; gap: 16px; padding: 17px 2px 0; }
.buttons .btn { width: 220px; }
.btn.default { border: 4px solid #2b7cb8; }
.ibeam { position: absolute; left: 363px; top: 380px; width: 28px; height: 50px; }

.watermark { position: absolute; right: 0; bottom: 20px; font: 300 76px/96px "Noto Sans CJK SC", sans-serif; color: #dedede; text-shadow: 2px 2px 1px #9a9a9a; white-space: nowrap; }
```
